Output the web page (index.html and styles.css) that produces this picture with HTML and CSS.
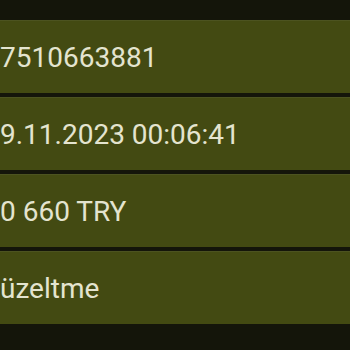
FILE: index.html
```html
<!DOCTYPE html>
<html lang="tr">

<head>
    <meta charset="UTF-8">
    <meta name="viewport" content="width=device-width, initial-scale=1.0">
    <title>İşlem detayları</title>
    <link rel="stylesheet" href="styles.css">
</head>

<body>
    <div class="list">
        <div class="row"><span class="value">7510663881</span></div>
        <div class="row"><span class="value">9.11.2023 00:06:41</span></div>
        <div class="row"><span class="value">0 660 TRY</span></div>
        <div class="row"><span class="value">üzeltme</span></div>
    </div>
</body>

</html>
```

FILE: styles.css
```css
body {
    margin: 0;
    background: #14150a;
    font-family: Roboto, 'Noto Sans', sans-serif;
    color: #e4e4cf;
    height: 350px;
    overflow: hidden;
}

.list {
    padding-top: 20px;
    display: flex;
    flex-direction: column;
    gap: 4px;
}

.row {
    height: 73px;
    background: #434a12;
    border-top: 1px solid #4c5320;
    box-sizing: border-box;
    display: flex;
    align-items: center;
}

.value {
    font-size: 28px;
    white-space: nowrap;
}
```
